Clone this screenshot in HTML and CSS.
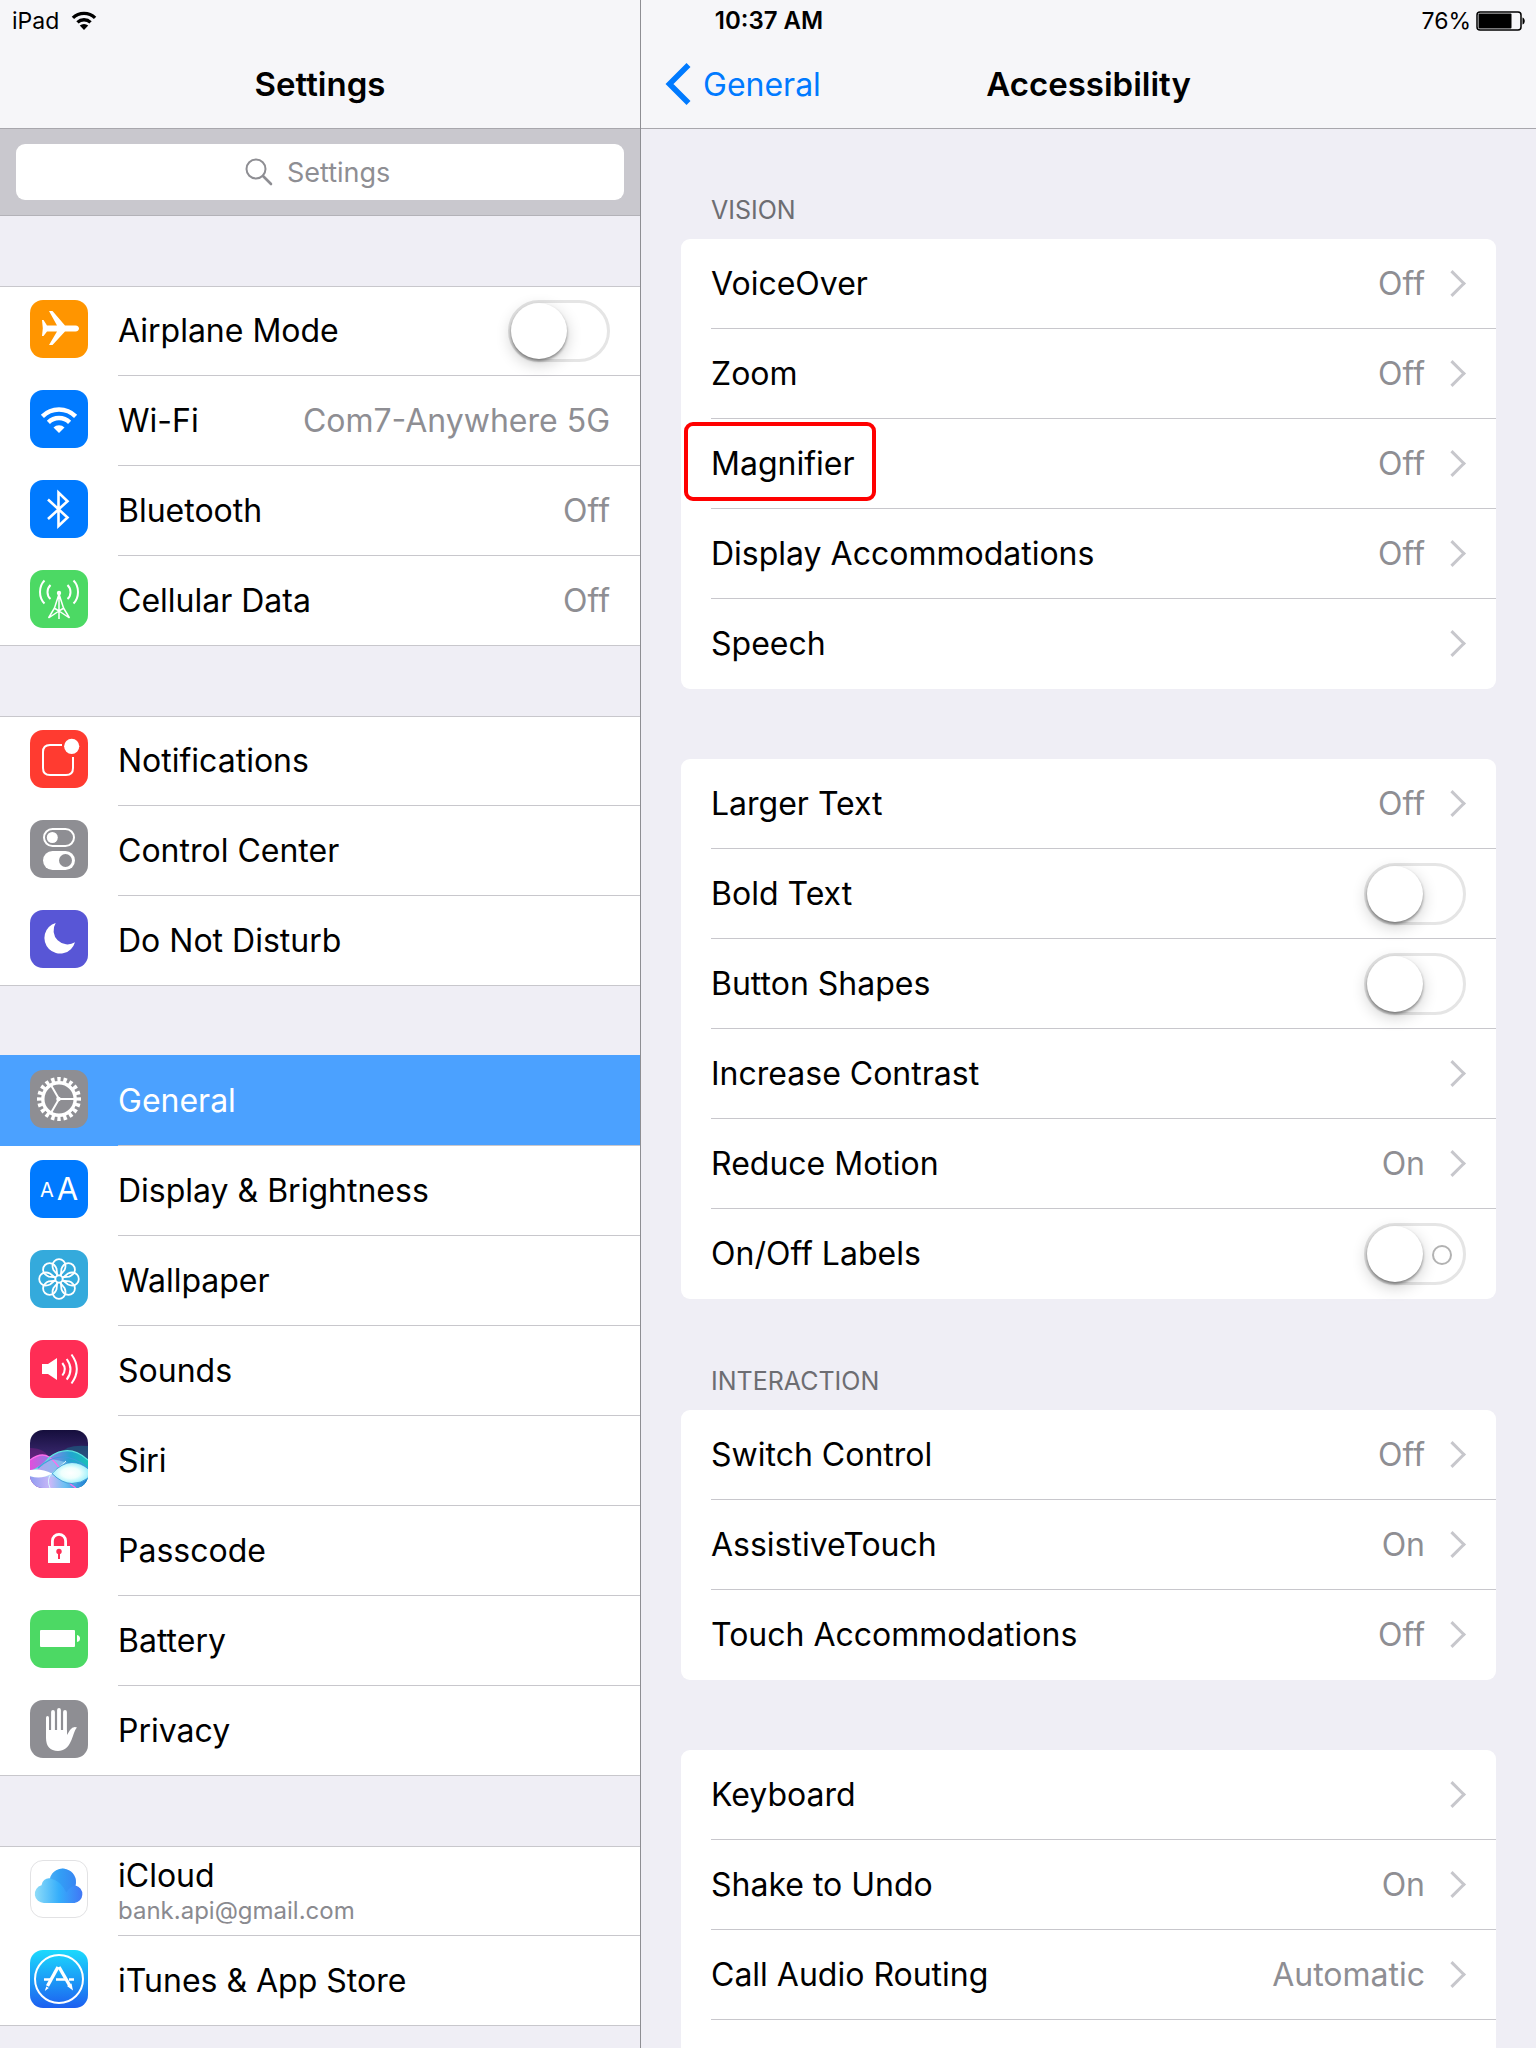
FILE: index.html
```html
<!DOCTYPE html>
<html lang="en">

<head>
  <meta charset="UTF-8" />
  <meta name="viewport" content="width=device-width, initial-scale=1" />
  <title>Settings</title>

  <link rel="stylesheet" href="styles.css">
</head>

<body>
  <div class="app">
    <div class="status-bar">
      <div class="status-left">iPad
        <svg width="26" height="19" viewBox="0 0 24 18">
          <path d="M1.500 6.500a15 15 0 0 1 21 0M5.800 10.800a9 9 0 0 1 12.400 0" fill="none" stroke="#000" stroke-width="3.200" />
          <path d="M12 18l-4-4.200a6 6 0 0 1 8 0z" />
        </svg>
      </div>
      <div class="status-time">10:37 AM</div>
      <div class="status-right">76%
        <svg width="50" height="20" viewBox="0 0 50 20">
          <rect x="1" y="1" width="44" height="18" rx="3" fill="none" stroke="#000" stroke-width="1.500" />
          <rect x="2.500" y="2.500" width="33" height="15" rx="1" />
          <path d="M46.500 6.500c3 1 3 6 0 7z" />
        </svg>
      </div>
    </div>

    <nav class="sidebar">
      <header class="bar">
        <h1>Settings</h1>
      </header>
      <div class="search">
        <label class="search-box">
          <svg width="28" height="28" viewBox="0 0 28 28" fill="none" stroke="#8e8e93" stroke-width="2">
            <circle cx="11" cy="11" r="9.500" />
            <path d="M18 18l8 8" stroke-width="2.600" stroke-linecap="round" />
          </svg>
          <input type="search" placeholder="Settings" aria-label="Search settings" />
        </label>
      </div>

      <ul class="group">
        <li class="row">
          <svg class="icon" viewBox="0 0 58 58">
            <rect width="58" height="58" rx="13" fill="#ff9500" />
            <path fill="#fff" d="M12 20h1.500l3.500 5.500h10L19 11h3.500L35 25.500h10.500c4.700 0 4.700 6 0 6H35L22.500 45H19l8-13.500H17L13.500 36H12l.8-7.700z" />
          </svg>
          <label class="row-body">Airplane Mode <input class="switch" type="checkbox" /></label>
        </li>
        <li class="row">
          <svg class="icon" viewBox="0 0 58 58">
            <rect width="58" height="58" rx="13" fill="#007aff" />
            <path fill="none" stroke="#fff" stroke-width="4.400" d="M12.400 26.400a23.500 23.500 0 0 1 33.200 0M18.400 32.400a15 15 0 0 1 21.200 0" />
            <path fill="#fff" d="M29 43l-5.500-5.500a7.700 7.700 0 0 1 11 0z" />
          </svg>
          <a class="row-body" href="#">Wi-Fi <span class="value">Com7-Anywhere 5G</span></a>
        </li>
        <li class="row">
          <svg class="icon" viewBox="0 0 58 58">
            <rect width="58" height="58" rx="13" fill="#007aff" />
            <path fill="none" stroke="#fff" stroke-width="2.600" d="M18 19.500l19.500 18-9 8.500V12.500l9 8.700L18 39" />
          </svg>
          <a class="row-body" href="#">Bluetooth <span class="value">Off</span></a>
        </li>
        <li class="row">
          <svg class="icon" viewBox="0 0 58 58">
            <rect width="58" height="58" rx="13" fill="#4cd964" />
            <g fill="none" stroke="#fff" stroke-width="2">
              <path d="M14.500 10.500c-6 6-6 17 0 23M20.500 15c-4 4-4 10.500 0 14M43.500 10.500c6 6 6 17 0 23M37.500 15c4 4 4 10.500 0 14" />
              <path d="M29 23v26M29 24l-4.500 14-6 10M29 24l4.500 14 6 10M18.500 48l15-10M39.500 48l-15-10M24 38l5 3 5-3" stroke-width="1.500" />
            </g>
            <circle cx="29" cy="23" r="2.200" fill="#fff" />
          </svg>
          <a class="row-body" href="#">Cellular Data <span class="value">Off</span></a>
        </li>
      </ul>

      <ul class="group">
        <li class="row">
          <svg class="icon" viewBox="0 0 58 58">
            <rect width="58" height="58" rx="13" fill="#ff3b30" />
            <path fill="none" stroke="#fff" stroke-width="2" d="M32 15H20q-7 0-7 7v16q0 7 7 7h16q7 0 7-7V27" />
            <circle cx="41.700" cy="16.300" r="7.600" fill="#fff" />
          </svg>
          <a class="row-body" href="#">Notifications</a>
        </li>
        <li class="row">
          <svg class="icon" viewBox="0 0 58 58">
            <rect width="58" height="58" rx="13" fill="#8e8e93" />
            <rect x="14" y="9" width="30" height="17" rx="8.500" fill="none" stroke="#fff" stroke-width="2" />
            <circle cx="22.300" cy="17.500" r="5.500" fill="#fff" />
            <rect x="13" y="31" width="32" height="19" rx="9.500" fill="#fff" />
            <circle cx="35.500" cy="40.500" r="6.500" fill="#8e8e93" />
          </svg>
          <a class="row-body" href="#">Control Center</a>
        </li>
        <li class="row">
          <svg class="icon" viewBox="0 0 58 58">
            <rect width="58" height="58" rx="13" fill="#5856d6" />
            <path fill="#fff" d="M25.700 13A15.600 15.600 0 1 0 45 32.300 14 14 0 0 1 25.700 13z" />
          </svg>
          <a class="row-body" href="#">Do Not Disturb</a>
        </li>
      </ul>

      <ul class="group">
        <li class="row selected">
          <svg class="icon" viewBox="0 0 58 58">
            <rect width="58" height="58" rx="13" fill="#8e8e93" />
            <g fill="none" stroke="#fff">
              <circle cx="29" cy="29" r="16.200" stroke-width="3.400" />
              <circle cx="29" cy="29" r="19.500" stroke-width="5" pathLength="40" stroke-dasharray="1.100 .9" stroke-dashoffset="0.550" />
              <path d="M29 29h15M29 29l-7.500-13M29 29l-7.500 13" stroke-width="2" />
            </g>
            <circle cx="28.500" cy="29" r="2.300" fill="#fff" />
          </svg>
          <a class="row-body" href="#">General</a>
        </li>
        <li class="row">
          <svg class="icon" viewBox="0 0 58 58">
            <rect width="58" height="58" rx="13" fill="#007aff" />
            <g fill="#fff" text-anchor="middle">
              <text x="17" y="37" font-size="20">A</text>
              <text x="37.500" y="40" font-size="31">A</text>
            </g>
          </svg>
          <a class="row-body" href="#">Display &amp; Brightness</a>
        </li>
        <li class="row">
          <svg class="icon" viewBox="0 0 58 58">
            <rect width="58" height="58" rx="13" fill="#34aadc" />
            <g fill="none" stroke="#fff" stroke-width="1.800">
              <path id="petal" d="M28 25.500L23.500 20q-1-2-1-4.300a6.500 6.500 0 0 1 13 0q0 2.300-1 4.300L30 25.500" />
              <use href="#petal" transform="rotate(45 29 29)" />
              <use href="#petal" transform="rotate(90 29 29)" />
              <use href="#petal" transform="rotate(135 29 29)" />
              <use href="#petal" transform="rotate(180 29 29)" />
              <use href="#petal" transform="rotate(225 29 29)" />
              <use href="#petal" transform="rotate(270 29 29)" />
              <use href="#petal" transform="rotate(315 29 29)" />
              <circle cx="29" cy="29" r="3.600" />
            </g>
          </svg>
          <a class="row-body" href="#">Wallpaper</a>
        </li>
        <li class="row">
          <svg class="icon" viewBox="0 0 58 58">
            <rect width="58" height="58" rx="13" fill="#ff2d55" />
            <path fill="#fff" d="M12 24h6l9-6v22l-9-6h-6z" />
            <path fill="none" stroke="#fff" stroke-width="2" d="M32.300 23q5 6.200 0 12.500M36.700 19q7.600 10.300 0 20.700M41.500 14.500q10.600 14.500 0 29" />
          </svg>
          <a class="row-body" href="#">Sounds</a>
        </li>
        <li class="row">
          <svg class="icon" viewBox="0 0 58 58">
            <defs>
              <linearGradient id="night" x1="0" y1="0" x2="0" y2="1">
                <stop offset="0" stop-color="#150e3c" />
                <stop offset=".5" stop-color="#3c2a72" />
              </linearGradient>
              <linearGradient id="tint" x1="0" y1="0" x2="1" y2="0">
                <stop offset="0" stop-color="#e04fdc" />
                <stop offset=".4" stop-color="#7f86e6" />
                <stop offset=".7" stop-color="#22a5d0" />
                <stop offset="1" stop-color="#18c0b8" />
              </linearGradient>
              <linearGradient id="low" x1="0" y1="0" x2="1" y2="0">
                <stop offset="0" stop-color="#8f9cf0" />
                <stop offset=".35" stop-color="#c9b8f8" />
                <stop offset=".6" stop-color="#6cc0f2" />
                <stop offset="1" stop-color="#1a7cd0" />
              </linearGradient>
              <radialGradient id="glow">
                <stop offset="0" stop-color="#fff" />
                <stop offset=".5" stop-color="#effffd" />
                <stop offset="1" stop-color="#9ff0fb" />
              </radialGradient>
              <clipPath id="tile"><rect width="58" height="58" rx="13" /></clipPath>
            </defs>
            <g clip-path="url(#tile)">
              <rect width="58" height="58" fill="url(#night)" />
              <path fill="#8a1f8c" fill-opacity=".45" d="M0 18q16 0 20 12L0 36z" />
              <path fill="#128a9a" fill-opacity=".4" d="M58 16Q36 14 30 24l28 10z" />
              <path fill="url(#tint)" d="M0 30q11-8 19-3 20-14 39 3v28H0z" />
              <path fill="url(#low)" d="M0 43h58v15H0z" />
              <path fill="#a5ddf8" fill-opacity=".55" d="M0 41q12-3 20-12 18 2 38 12v6H0z" />
              <path fill="none" stroke="#ff6cec" stroke-width="1.400" d="M0 30q11-8 19-3 8 6 12 14 6 12 15 17" />
              <path fill="none" stroke="#5ce6e0" stroke-width="1.300" d="M0 42q12-5 20-15 19-14 38 3" />
              <path fill="none" stroke="#3f9ade" stroke-width="1.200" d="M8 38q24-22 50 0" />
              <path fill="none" stroke="#d9f6ff" stroke-width="1" d="M22 43q-6 6-2 15M22 43q8-6 14-12" />
              <path fill="#fff" d="M0 40q11-2 22 3.500Q11 50 0 46z" />
              <path fill="url(#glow)" stroke="#2d8fd2" stroke-width=".8" d="M22 43.500q10-11 20-11 9 0 17 7v8q-8 6-17 6-10 0-20-10z" />
            </g>
          </svg>
          <a class="row-body" href="#">Siri</a>
        </li>
        <li class="row">
          <svg class="icon" viewBox="0 0 58 58">
            <rect width="58" height="58" rx="13" fill="#ff2d55" />
            <rect x="18" y="26" width="22" height="17" fill="#fff" />
            <path fill="none" stroke="#fff" stroke-width="2.800" d="M22.400 27v-6a6.600 6.600 0 0 1 13.200 0v6" />
            <circle cx="29" cy="31.500" r="2.700" fill="#ff2d55" />
            <rect x="28" y="32" width="2" height="7" fill="#ff2d55" />
          </svg>
          <a class="row-body" href="#">Passcode</a>
        </li>
        <li class="row">
          <svg class="icon" viewBox="0 0 58 58">
            <rect width="58" height="58" rx="13" fill="#4cd964" />
            <rect x="10" y="20" width="35" height="17" rx="1" fill="#fff" />
            <path fill="#fff" d="M47 25q3 .5 3 3.500t-3 3.500z" />
          </svg>
          <a class="row-body" href="#">Battery</a>
        </li>
        <li class="row">
          <svg class="icon" viewBox="0 0 58 58">
            <rect width="58" height="58" rx="13" fill="#8e8e93" />
            <path fill="none" stroke="#fff" stroke-width="3.800" stroke-linecap="round" d="M23 12v20M29 10v20M35 12v20" />
            <path fill="none" stroke="#fff" stroke-width="3" stroke-linecap="round" d="M17.500 17.500V34" />
            <path fill="#fff" d="M16 30h21v5l3-5q3-4 7-2.500c-3 3-3.500 9-6.500 14.500C38 47.500 34 51 28 51c-8 0-12-5-12-13z" />
          </svg>
          <a class="row-body" href="#">Privacy</a>
        </li>
      </ul>

      <ul class="group">
        <li class="row">
          <svg class="icon" viewBox="0 0 58 58">
            <defs>
              <linearGradient id="sky" gradientUnits="userSpaceOnUse" x1="5" y1="0" x2="53" y2="0">
                <stop offset="0" stop-color="#8fdcf8" />
                <stop offset=".5" stop-color="#35aefb" />
                <stop offset="1" stop-color="#4175f5" />
              </linearGradient>
            </defs>
            <rect x=".5" y=".5" width="57" height="57" rx="12.500" fill="#fff" stroke="#e2e2e4" />
            <path fill="url(#sky)" d="M14 43a9 9 0 0 1-2.500-17.700 7.500 7.500 0 0 1 8.500-7 13 13 0 0 1 25.500 7.200A8.900 8.900 0 0 1 44.500 43z" />
            <path fill="#2f86ea" fill-opacity=".35" d="M20 18.300a13 13 0 0 1 25.500 7.200q-6 1-9 7-6-12-16.500-14.200z" />
          </svg>
          <a class="row-body" href="#"><span class="stack">iCloud<small>bank.api@gmail.com</small></span></a>
        </li>
        <li class="row">
          <svg class="icon" viewBox="0 0 58 58">
            <defs>
              <linearGradient id="store" x1="0" y1="0" x2="0" y2="1">
                <stop offset="0" stop-color="#1bdafd" />
                <stop offset="1" stop-color="#1d5ff0" />
              </linearGradient>
            </defs>
            <rect width="58" height="58" rx="13" fill="url(#store)" />
            <circle cx="29" cy="29" r="24" fill="none" stroke="#fff" stroke-width="2" />
            <g stroke="#fff" fill="#fff">
              <path d="M14 29.500h8M26 29.500h9M39 29.500h5" stroke-width="2.600" />
              <path d="M28 17L17.500 36" stroke-width="3.400" />
              <path d="M29 17l11 19" stroke-width="3.400" />
              <path d="M16.300 36.500l2.500 1.500-4 3z" stroke="none" />
              <path d="M37 36l4.500-2.500 1.500 7z" stroke="none" />
            </g>
          </svg>
          <a class="row-body" href="#">iTunes &amp; App Store</a>
        </li>
      </ul>
    </nav>

    <main class="detail">
      <header class="bar">
        <a class="back" href="#">
          <svg width="26" height="42" viewBox="0 0 26 42"><path d="M23.500 2L4.500 21l19 19" fill="none" stroke="#007aff" stroke-width="5.600" /></svg>
          General
        </a>
        <h1>Accessibility</h1>
      </header>

      <h2>VISION</h2>
      <ul class="card">
        <li><a class="row-body next" href="#">VoiceOver <span class="value">Off</span></a></li>
        <li><a class="row-body next" href="#">Zoom <span class="value">Off</span></a></li>
        <li class="marked"><a class="row-body next" href="#">Magnifier <span class="value">Off</span></a></li>
        <li><a class="row-body next" href="#">Display Accommodations <span class="value">Off</span></a></li>
        <li><a class="row-body next" href="#">Speech</a></li>
      </ul>

      <ul class="card">
        <li><a class="row-body next" href="#">Larger Text <span class="value">Off</span></a></li>
        <li><label class="row-body">Bold Text <input class="switch" type="checkbox" /></label></li>
        <li><label class="row-body">Button Shapes <input class="switch" type="checkbox" /></label></li>
        <li><a class="row-body next" href="#">Increase Contrast</a></li>
        <li><a class="row-body next" href="#">Reduce Motion <span class="value">On</span></a></li>
        <li><label class="row-body">On/Off Labels <input class="switch labelled" type="checkbox" /></label></li>
      </ul>

      <h2>INTERACTION</h2>
      <ul class="card">
        <li><a class="row-body next" href="#">Switch Control <span class="value">Off</span></a></li>
        <li><a class="row-body next" href="#">AssistiveTouch <span class="value">On</span></a></li>
        <li><a class="row-body next" href="#">Touch Accommodations <span class="value">Off</span></a></li>
      </ul>

      <ul class="card open">
        <li><a class="row-body next" href="#">Keyboard</a></li>
        <li><a class="row-body next" href="#">Shake to Undo <span class="value">On</span></a></li>
        <li><a class="row-body next" href="#">Call Audio Routing <span class="value">Automatic</span></a></li>
      </ul>
    </main>
  </div>
</body>

</html>
```

FILE: styles.css
```css
*,
*::before,
*::after {
  box-sizing: border-box;
}

body {
  margin: 0;
  font-family: Inter, "Liberation Sans", sans-serif;
  font-size: 32px;
  color: #000;
  background-color: #efeef5;
}

ul {
  margin: 0;
  padding: 0;
  list-style: none;
}

a {
  color: inherit;
  text-decoration: none;
}

.app {
  position: relative;
  display: grid;
  grid-template-columns: 5fr 7fr;
  min-height: 100vh;
}

/* status bar floats over both panes */
.status-bar {
  position: absolute;
  top: 0;
  left: 0;
  right: 0;
  display: grid;
  grid-template-columns: 1fr auto 1fr;
  align-items: center;
  height: 41px;
  padding: 0 10px 0 12px;
  font-size: 23px;
}

.status-left,
.status-right {
  display: flex;
  align-items: center;
  gap: 12px;
}

.status-right {
  justify-content: flex-end;
  gap: 5px;
}

.status-time {
  font-size: 24px;
  font-weight: 600;
}

.bar {
  display: grid;
  grid-template-columns: 1fr auto 1fr;
  align-items: center;
  height: 129px;
  padding-top: 40px;
  background-color: #f6f6f9;
  border-bottom: 1px solid #a8a7ad;
}

.bar h1 {
  grid-column: 2;
  margin: 0;
  font-size: 33px;
  font-weight: 600;
}

.back {
  display: flex;
  align-items: center;
  gap: 12px;
  padding-left: 24px;
  color: #007aff;
}

/* left pane */
.search {
  height: 87px;
  padding: 15px 16px;
  background-color: #c9c8ce;
  border-bottom: 1px solid #b3b2b8;
}

.search-box {
  display: flex;
  justify-content: center;
  align-items: center;
  gap: 14px;
  height: 56px;
  border-radius: 9px;
  background-color: #fff;
}

.search-box input {
  width: 108px;
  padding: 0;
  border: 0;
  outline: 0;
  font: inherit;
  font-size: 27px;
  background: none;
  appearance: none;
}

.search-box input::placeholder {
  color: #8e8e93;
}

.search-box input::-webkit-search-cancel-button {
  display: none;
}

.group {
  margin-top: 70px;
  background-color: #fff;
  box-shadow: inset 0 1px #c8c7cc, inset 0 -1px #c8c7cc;
}

.row {
  display: flex;
  align-items: flex-start;
  padding-left: 30px;
}

.icon {
  flex: none;
  width: 58px;
  height: 58px;
  margin: 14px 30px 0 0;
}

.row-body {
  flex: 1;
  display: flex;
  align-items: center;
  height: 90px;
  padding-right: 30px;
  border-bottom: 1px solid #c8c7cc;
}

.selected {
  margin-top: -1px;
  padding-top: 1px;
  color: #fff;
  background-color: #4ba1ff;
}

.value {
  margin-left: auto;
  color: #8e8e93;
}

.stack {
  display: flex;
  flex-direction: column;
  padding-top: 4px;
  line-height: 36px;
}

.stack small {
  font-size: 24px;
  line-height: 34px;
  color: #8a8a8f;
}

.switch {
  appearance: none;
  position: relative;
  width: 102px;
  height: 62px;
  margin: 0 0 0 auto;
  border: 3px solid #e5e5e5;
  border-radius: 31px;
}

.switch::before {
  content: "";
  display: block;
  width: 56px;
  height: 56px;
  border-radius: 50%;
  background-color: #fff;
  box-shadow: 0 2px 3px rgba(0, 0, 0, .4), 0 5px 16px rgba(0, 0, 0, .2);
}

.switch:checked {
  border-color: #4cd964;
  background-color: #4cd964;
}

.switch:checked::before {
  margin-left: auto;
}

.labelled::after {
  content: "";
  position: absolute;
  top: 19px;
  right: 11px;
  width: 20px;
  height: 20px;
  border: 2px solid #b2b2b2;
  border-radius: 50%;
}

/* right pane */
.detail {
  display: flex;
  flex-direction: column;
  border-left: 1px solid #8e8e93;
}

.detail h2 {
  margin: 66px 71px 14px 70px;
  font-size: 25px;
  font-weight: 400;
  line-height: 30px;
  color: #6d6d72;
}

.card {
  margin: 0 40px;
  padding-left: 30px;
  border-radius: 9px;
  background-color: #fff;
}

.card + .card {
  margin-top: 70px;
}

.detail .card + h2 {
  margin-top: 67px;
}

.card li:last-child .row-body {
  border-bottom-color: transparent;
}

/* last card runs on past the bottom of the screen */
.card.open {
  flex: 1;
  min-height: 298px;
  border-radius: 9px 9px 0 0;
}

.card.open li:last-child .row-body {
  border-bottom-color: #c8c7cc;
}

.next::after {
  content: "";
  flex: none;
  width: 19px;
  height: 19px;
  margin: 0 4px 0 18px;
  border: solid #c7c7cc;
  border-width: 3px 3px 0 0;
  transform: rotate(45deg);
}

.next:not(:has(.value))::after {
  margin-left: auto;
}

.marked {
  position: relative;
}

.marked::before {
  content: "";
  position: absolute;
  top: 3px;
  left: -27px;
  width: 192px;
  height: 79px;
  border: 4px solid #f00;
  border-radius: 9px;
}
```
